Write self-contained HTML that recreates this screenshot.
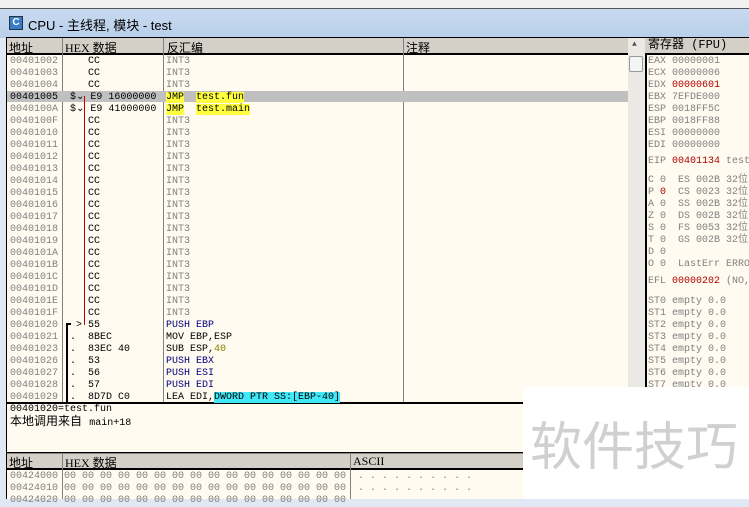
<!DOCTYPE html>
<html><head><meta charset="utf-8"><style>
*{margin:0;padding:0;box-sizing:border-box}
body{width:749px;height:499px;overflow:hidden;background:#dfe8f3;position:relative;font-family:"Liberation Mono","Noto Sans CJK SC",monospace;font-size:10px}
.a{position:absolute}
.m{font-family:"Liberation Mono","Noto Sans CJK SC",monospace;font-size:10px;white-space:pre;line-height:12px}
.hd{position:absolute;background:#d4d0c8;border-bottom:2px solid #000;height:17px;font-size:12px;line-height:15px;white-space:pre}
.g{color:#808080}.r{color:#b00000}.b{color:#000080}.o{color:#808000}
.y{background:#ffff40}.c{background:#40e8f8}
</style></head><body>
<div class="a" style="left:0;top:0;width:749px;height:8px;background:#f0f0f0"></div>
<div class="a" style="left:0;top:8px;width:749px;height:30px;background:linear-gradient(#c8daf0,#b9cfe9);border-top:1px solid #555"></div>
<div class="a" style="left:9px;top:16px;width:14px;height:14px;background:#3a7cc8;border:1px solid #234;color:#fff;font:bold 10px 'Liberation Sans';text-align:center;line-height:12px">C</div>
<div class="a" style="left:28px;top:15px;font:13px 'Liberation Sans','Noto Sans CJK SC',sans-serif;color:#000">CPU -  主线程, 模块 - test</div>
<div class="a" style="left:6px;top:37px;width:743px;height:462px;background:#000"></div>
<div class="a" style="left:7px;top:38px;width:621px;height:364px;background:#fffbf0"></div>
<div class="hd" style="left:7px;top:38px;width:621px"></div>
<div class="a" style="left:9px;top:39px;font-size:12px;font-family:'Noto Sans CJK SC',sans-serif;text-decoration:underline">地址</div>
<div class="a" style="left:65px;top:39px;font-size:12px;font-family:'Liberation Serif','Noto Sans CJK SC',serif">HEX 数据</div>
<div class="a" style="left:167px;top:39px;font-size:12px;font-family:'Noto Sans CJK SC',sans-serif">反汇编</div>
<div class="a" style="left:406px;top:39px;font-size:12px;font-family:'Noto Sans CJK SC',sans-serif">注释</div>
<div class="a" style="left:62px;top:38px;width:1px;height:364px;background:#808080"></div>
<div class="a" style="left:163px;top:38px;width:1px;height:364px;background:#808080"></div>
<div class="a" style="left:403px;top:38px;width:1px;height:364px;background:#808080"></div>
<div class="a" style="left:7px;top:91px;width:621px;height:11px;background:#c0c0c0"></div>
<div class="a m g" style="left:10px;top:56px">00401002
00401003
00401004
<span style="color:#000">00401005</span>
0040100A
0040100F
00401010
00401011
00401012
00401013
00401014
00401015
00401016
00401017
00401018
00401019
0040101A
0040101B
0040101C
0040101D
0040101E
0040101F
00401020
00401021
00401023
00401026
00401027
00401028
00401029</div>
<div class="a m" style="left:70px;top:56px">   CC
   CC
   CC
$⌄ E9 16000000
$⌄ E9 41000000
   CC
   CC
   CC
   CC
   CC
   CC
   CC
   CC
   CC
   CC
   CC
   CC
   CC
   CC
   CC
   CC
   CC
 > 55
.  8BEC
.  83EC 40
.  53
.  56
.  57
.  8D7D C0</div>
<div class="a" style="left:84px;top:96px;width:1px;height:229px;background:#c00000"></div>
<div class="a" style="left:66px;top:323px;width:2px;height:79px;background:#000"></div>
<div class="a" style="left:66px;top:323px;width:5px;height:2px;background:#000"></div>
<div class="a m" style="left:166px;top:56px"><span class="g">INT3
INT3
INT3</span>
<span class="y">JMP</span>  <span class="y">test.fun</span>
<span class="y">JMP</span>  <span class="y">test.main</span>
<span class="g">INT3
INT3
INT3
INT3
INT3
INT3
INT3
INT3
INT3
INT3
INT3
INT3
INT3
INT3
INT3
INT3
INT3</span>
<span class="b">PUSH EBP</span>
MOV EBP,ESP
SUB ESP,<span class="o">40</span>
<span class="b">PUSH EBX</span>
<span class="b">PUSH ESI</span>
<span class="b">PUSH EDI</span>
LEA EDI,<span class="c">DWORD PTR SS:[EBP-40]</span></div>
<div class="a" style="left:628px;top:38px;width:17px;height:364px;background:#ebe9e4"></div>
<div class="a" style="left:629px;top:56px;width:14px;height:16px;background:#f4f4f4;border:1px solid #999;border-radius:2px"></div>
<div class="a" style="left:632px;top:40px;font-size:8px;color:#555">▲</div>
<div class="a" style="left:645px;top:38px;width:104px;height:350px;background:#fffbf0;border-left:2px solid #000"></div>
<div class="hd" style="left:645px;top:38px;width:104px;font-family:'Liberation Mono','Noto Sans CJK SC',monospace;padding-left:3px">寄存器 (FPU)</div>
<div class="a m g" style="left:648px;top:56px">EAX 00000001
ECX 00000006
EDX <span class="r">00000601</span>
EBX 7EFDE000
ESP 0018FF5C
EBP 0018FF88
ESI 00000000
EDI 00000000</div>
<div class="a m g" style="left:648px;top:156px">EIP <span class="r">00401134</span> test</div>
<div class="a m g" style="left:648px;top:175px">C 0  ES 002B 32位
P <span class="r">0</span>  CS 0023 32位
A 0  SS 002B 32位
Z 0  DS 002B 32位
S 0  FS 0053 32位
T 0  GS 002B 32位
D 0
O 0  LastErr ERRO</div>
<div class="a m g" style="left:648px;top:276px">EFL <span class="r">00000202</span> (NO,</div>
<div class="a m g" style="left:648px;top:296px">ST0 empty 0.0
ST1 empty 0.0
ST2 empty 0.0
ST3 empty 0.0
ST4 empty 0.0
ST5 empty 0.0
ST6 empty 0.0
ST7 empty 0.0</div>
<div class="a" style="left:7px;top:404px;width:621px;height:48px;background:#fffbf0"></div>
<div class="a m" style="left:10px;top:404px">00401020=test.fun</div>
<div class="a" style="left:10px;top:415px;font-family:'Liberation Mono','Noto Sans CJK SC',monospace;font-size:12px;line-height:14px">本地调用来自 <span style="font-size:10px">main+18</span></div>
<div class="a" style="left:7px;top:453px;width:520px;height:46px;background:#fffbf0"></div>
<div class="hd" style="left:7px;top:453px;width:520px;border-top:1px solid #888"></div>
<div class="a" style="left:9px;top:454px;font-size:12px;font-family:'Noto Sans CJK SC',sans-serif">地址</div>
<div class="a" style="left:65px;top:454px;font-size:12px;font-family:'Liberation Serif','Noto Sans CJK SC',serif">HEX 数据</div>
<div class="a" style="left:353px;top:454px;font-size:12px;font-family:'Liberation Serif',serif">ASCII</div>
<div class="a" style="left:62px;top:453px;width:1px;height:46px;background:#808080"></div>
<div class="a" style="left:350px;top:453px;width:1px;height:46px;background:#808080"></div>
<div class="a m g" style="left:10px;top:471px">00424000 00 00 00 00 00 00 00 00 00 00 00 00 00 00 00 00  . . . . . . . . . .
00424010 00 00 00 00 00 00 00 00 00 00 00 00 00 00 00 00  . . . . . . . . . .
00424020 00 00 00 00 00 00 00 00 00 00 00 00 00 00 00 00</div>
<div class="a" style="left:523px;top:387px;width:226px;height:112px;background:#fff"></div>
<div class="a" style="left:530px;top:405px;font:52px 'Noto Sans CJK SC',sans-serif;color:#d0d0d0;letter-spacing:0px">软件技巧</div>
</body></html>
